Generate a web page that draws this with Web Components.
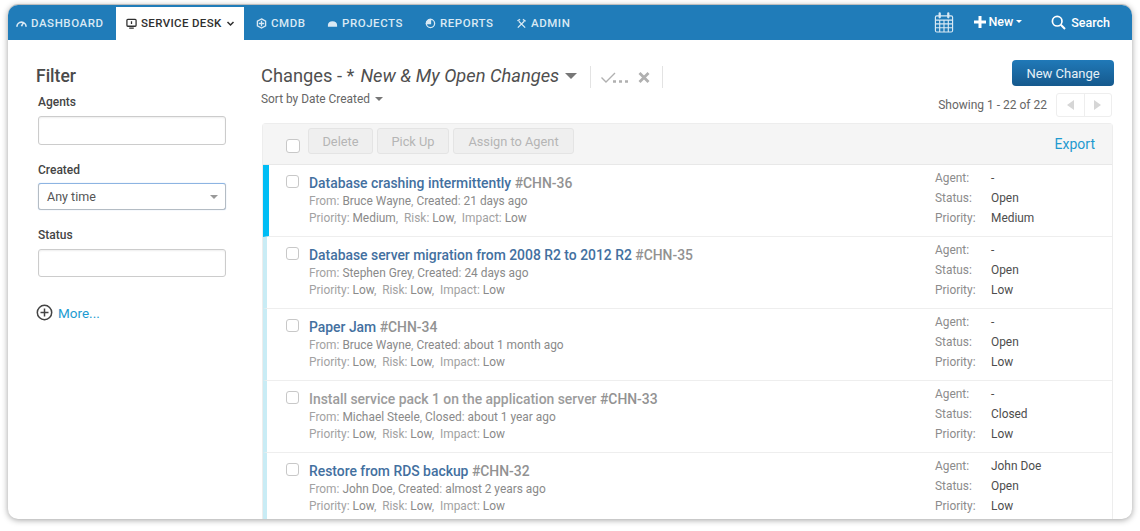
<!DOCTYPE html>
<html lang="en">
<head>
<meta charset="utf-8">
<title>Changes</title>
<style>
  html, body { margin: 0; height: 100%; background: #fff; }
  body { font-family: Roboto, "Liberation Sans", sans-serif; overflow: hidden; }
</style>
</head>
<body>
<app-window>
  <app-nav slot="nav"></app-nav>
  <filter-panel slot="side"></filter-panel>
  <changes-view slot="main">
    <change-row title-text="Database crashing intermittently" ref="#CHN-36" from="Bruce Wayne" when-label="Created" when="21 days ago" priority="Medium" status="Open" stripe="strong"></change-row>
    <change-row title-text="Database server migration from 2008 R2 to 2012 R2" ref="#CHN-35" from="Stephen Grey" when-label="Created" when="24 days ago" priority="Low" status="Open"></change-row>
    <change-row title-text="Paper Jam" ref="#CHN-34" from="Bruce Wayne" when-label="Created" when="about 1 month ago" priority="Low" status="Open"></change-row>
    <change-row title-text="Install service pack 1 on the application server" ref="#CHN-33" from="Michael Steele" when-label="Closed" when="about 1 year ago" priority="Low" status="Closed" closed></change-row>
    <change-row title-text="Restore from RDS backup" ref="#CHN-32" from="John Doe" when-label="Created" when="almost 2 years ago" priority="Low" status="Open" agent="John Doe"></change-row>
  </changes-view>
</app-window>

<script>
const windowTemplate = document.createElement('template');
windowTemplate.innerHTML = /*html*/`
  <style>
    :host {
      display: block;
      box-sizing: border-box;
      height: 531px;
      padding: 5px 8px 12px 8px;
    }
    #frame {
      height: 100%;
      display: flex;
      flex-direction: column;
      background: #fff;
      border-radius: 10px;
      box-shadow: 0 -1px 0 #bdbdbd, 0 1px 6px rgba(0, 0, 0, .38);
      overflow: hidden;
    }
    #body { flex: 1; min-height: 0; display: flex; }
  </style>
  <div id="frame">
    <slot name="nav"></slot>
    <div id="body">
      <slot name="side"></slot>
      <slot name="main"></slot>
    </div>
  </div>`;

class AppWindow extends HTMLElement {
  constructor() {
    super();
    this.attachShadow({ mode: 'open' });
  }

  connectedCallback() {
    this.shadowRoot.appendChild(windowTemplate.content.cloneNode(true));
  }
}

const navTemplate = document.createElement('template');
navTemplate.innerHTML = /*html*/`
  <style>
    :host {
      display: flex;
      height: 35px;
      flex: none;
      background: #207cb9;
      color: #d9e9f4;
      font-size: 11.5px;
      font-weight: 500;
      letter-spacing: .55px;
      padding-left: 8px;
      align-items: flex-end;
    }
    .tab {
      height: 33px;
      display: flex;
      align-items: center;
      gap: 4px;
      padding-bottom: 1px;
      box-sizing: border-box;
      white-space: nowrap;
    }
    .tab svg { width: 11px; height: 11px; fill: none; stroke: currentColor; stroke-width: 1.4; flex: none; }
    .dash { width: 92px; }
    .desk {
      width: 128px;
      margin-left: 8px;
      padding-left: 10px;
      background: #fff;
      color: #2f2f2f;
      letter-spacing: .35px;
    }
    .cmdb { width: 71px; margin-left: 12px; }
    .proj { width: 98px; }
    .rep { width: 91px; }
    .adm { width: 70px; }
    .right {
      margin-left: auto;
      height: 35px;
      display: flex;
      align-items: center;
      color: #fff;
      font-size: 12.5px;
      letter-spacing: 0;
      padding-right: 22px;
    }
    .cal { width: 20px; height: 21px; margin-right: 20px; }
    .new { display: flex; align-items: center; gap: 2px; margin-right: 29px; position: relative; top: -1px; }
    .new .plus { width: 12px; height: 12px; fill: #fff; }
    .new .caret { width: 0; height: 0; border: 3.5px solid transparent; border-top-color: #fff; border-bottom: 0; margin-left: 1px; }
    .search { display: flex; align-items: center; gap: 5px; }
    .search svg { width: 15px; height: 15px; fill: none; stroke: #fff; stroke-width: 1.7; }
  </style>
  <div class="tab dash">
    <svg viewBox="0 0 12 12" style="stroke-width:1.800"><path d="M1 9.500a5 5 0 0 1 10 0M6 9l2-4"/></svg>DASHBOARD
  </div>
  <div class="tab desk">
    <svg viewBox="0 0 12 12"><rect x="1" y="1.500" width="10" height="7.500" rx="1"/><path d="M3.500 11h5M6 3.500v3"/></svg>SERVICE DESK
    <svg viewBox="0 0 12 12" style="width:9px;height:9px;stroke-width:2"><path d="M2 4l4 4 4-4"/></svg>
  </div>
  <div class="tab cmdb">
    <svg viewBox="0 0 12 12"><path d="M6 1l4.500 2.500v5L6 11 1.500 8.500v-5zM3 6h6M6 3v6"/></svg>CMDB
  </div>
  <div class="tab proj">
    <svg viewBox="0 0 12 12" style="fill:currentColor;stroke:none"><path d="M1 9.500V7.500C1 5 3 3.500 6 3.500s5 1.500 5 4v2z"/></svg>PROJECTS
  </div>
  <div class="tab rep">
    <svg viewBox="0 0 12 12"><circle cx="6" cy="6" r="4.500"/><path d="M6 1.500V6H1.500A4.500 4.500 0 0 1 6 1.500z" fill="currentColor"/></svg>REPORTS
  </div>
  <div class="tab adm">
    <svg viewBox="0 0 12 12"><path d="M2 10.500l7-7M10 10.500L3 3.500M1.500 3l3-1.500M7.500 1.500l3 2"/></svg>ADMIN
  </div>
  <div class="right">
    <svg class="cal" viewBox="0 0 20 22" fill="none" stroke="#d9e9f4" stroke-width="1.200">
      <rect x="1" y="4" width="18" height="17" rx="1.500"/>
      <path d="M1 8.500h18M1 12.500h18M1 16.500h18M5.500 8.500V21M10 8.500V21M14.500 8.500V21"/>
      <path d="M5.500 1.500v4M14.500 1.500v4" stroke-width="2.400" stroke-linecap="round"/>
    </svg>
    <div class="new">
      <svg class="plus" viewBox="0 0 12 12"><path d="M4.500 0h3v4.500H12v3H7.500V12h-3V7.500H0v-3h4.500z"/></svg>
      <span>New</span><span class="caret"></span>
    </div>
    <div class="search">
      <svg viewBox="0 0 15 15"><circle cx="6.200" cy="6.200" r="4.800"/><path d="M9.800 9.800L14 14" stroke-width="2"/></svg>
      <span>Search</span>
    </div>
  </div>`;

class AppNav extends HTMLElement {
  constructor() {
    super();
    this.attachShadow({ mode: 'open' });
  }

  connectedCallback() {
    this.shadowRoot.appendChild(navTemplate.content.cloneNode(true));
  }
}

const filterTemplate = document.createElement('template');
filterTemplate.innerHTML = /*html*/`
  <style>
    :host {
      display: block;
      flex: none;
      width: 253px;
      box-sizing: border-box;
      padding: 27px 0 0 30px;
      color: #444;
    }
    h2 { margin: 0 0 10px -2px; font-size: 17.500px; font-weight: 500; line-height: 18px; color: #4a4a4a; }
    label { display: block; font-size: 12px; font-weight: 500; line-height: 14px; color: #444; }
    .input {
      width: 188px;
      height: 29px;
      box-sizing: border-box;
      margin: 7px 0 18px;
      border: 1px solid #ccc;
      border-radius: 3px;
      box-shadow: inset 0 1px 2px rgba(0, 0, 0, .07);
      background: #fff;
    }
    .select {
      height: 27px;
      margin: 6px 0 18px;
      border: 1px solid #b4bcc4;
      border-top-color: #8db4e2;
      box-shadow: 0 0 1px rgba(82, 150, 230, .5);
      display: flex;
      align-items: center;
      justify-content: space-between;
      padding: 0 7px 0 8px;
      font-size: 12.500px;
      color: #555;
    }
    .select i { width: 0; height: 0; border: 4px solid transparent; border-top-color: #999; border-bottom: 0; }
    .status { margin: 7px 0 0; height: 28px; }
    .more {
      display: flex;
      align-items: center;
      gap: 5px;
      margin: 27px 0 0 -2px;
      font-size: 13.500px;
      color: #1d9bd1;
    }
    .more svg { width: 17px; height: 17px; fill: none; stroke: #444; stroke-width: 1.500; }
  </style>
  <h2>Filter</h2>
  <label>Agents</label>
  <div class="input"></div>
  <label>Created</label>
  <div class="input select"><span>Any time</span><i></i></div>
  <label>Status</label>
  <div class="input status"></div>
  <div class="more">
    <svg viewBox="0 0 17 17"><circle cx="8.500" cy="8.500" r="7.200"/><path d="M8.500 4.500v8M4.500 8.500h8"/></svg>
    <span>More...</span>
  </div>`;

class FilterPanel extends HTMLElement {
  constructor() {
    super();
    this.attachShadow({ mode: 'open' });
  }

  connectedCallback() {
    this.shadowRoot.appendChild(filterTemplate.content.cloneNode(true));
  }
}

const viewTemplate = document.createElement('template');
viewTemplate.innerHTML = /*html*/`
  <style>
    :host {
      display: block;
      flex: 1;
      min-width: 0;
      padding: 0 19px 0 0;
      color: #555;
    }
    header { display: flex; justify-content: space-between; height: 83px; box-sizing: border-box; }
    .heading { padding-top: 25px; }
    .title { display: flex; align-items: center; height: 21px; font-size: 18.300px; color: #4f4f4f; white-space: nowrap; }
    .title em { margin-left: 6px; font-style: italic; }
    .title .caret { width: 0; height: 0; border: 6px solid transparent; border-top: 6px solid #777; border-bottom: 0; margin: 1px 0 0 6px; }
    .tools { display: flex; align-items: center; height: 22px; margin: 3px 0 0 13px; border-left: 1px solid #e3e3e3; border-right: 1px solid #e3e3e3; padding: 0 12px 0 10px; gap: 9px; }
    .tools svg { display: block; fill: none; stroke: #b0b0b0; }
    .sort { display: flex; align-items: center; margin-top: 6px; font-size: 11.900px; color: #666; }
    .sort i { width: 0; height: 0; border: 4px solid transparent; border-top-color: #777; border-bottom: 0; margin-left: 5px; }
    .actions { display: flex; flex-direction: column; align-items: flex-end; padding-top: 20px; }
    .primary {
      width: 102px; height: 26px; margin-right: -1px;
      display: flex; align-items: center; justify-content: center;
      border-radius: 4px;
      background: linear-gradient(#2079b8, #15598d);
      color: #e6f0f7;
      font-size: 13px;
      box-sizing: border-box;
    }
    .paging { display: flex; align-items: center; gap: 9px; margin: 7px 1px 0 0; font-size: 12px; color: #666; }
    .pager { display: flex; width: 56px; height: 24px; box-sizing: border-box; border: 1px solid #eee; border-radius: 3px; }
    .pager span { flex: 1; display: flex; align-items: center; justify-content: center; }
    .pager span + span { border-left: 1px solid #eee; }
    .pager i { width: 0; height: 0; border: 5.500px solid transparent; }
    .pager .l { border-left: 0; border-right: 7px solid #d6d6d6; }
    .pager .r { border-right: 0; border-left: 7px solid #d6d6d6; }
    .panel { border: 1px solid #ededed; border-bottom: 0; border-radius: 4px 4px 0 0; margin-left: 1px; }
    .bar {
      height: 41px;
      background: #f5f5f5;
      border-bottom: 1px solid #e8e8e8;
      display: flex;
      align-items: flex-start;
      padding: 4px 0 0 23px;
      box-sizing: border-box;
      gap: 4px;
    }
    .check { width: 12px; height: 12px; border: 1px solid #c8c8c8; border-radius: 3px; background: #fff; margin: 11px 4px 0 0; }
    .btn {
      height: 26px;
      display: flex; align-items: center; justify-content: center;
      box-sizing: border-box;
      border: 1px solid #e4e4e4;
      border-radius: 3px;
      background: #efefef;
      color: #b5b5b5;
      font-size: 12.800px;
    }
    .export { margin-left: auto; padding: 8px 17px 0 0; font-size: 14px; color: #1f9ad0; }
  </style>
  <header>
    <div class="heading">
      <div class="title">
        <span>Changes - *</span><em>New &amp; My Open Changes</em><span class="caret"></span>
        <div class="tools">
          <svg width="28" height="12" viewBox="0 0 28 12"><path d="M0.500 6.500l4.500 4.500 9-9" stroke-width="1.400"/><path d="M12 10.500h3M18 10.500h3M24 10.500h3" stroke-width="2.400"/></svg>
          <svg width="12" height="11" viewBox="0 0 12 11"><path d="M1.500 1l9 9M10.500 1l-9 9" stroke-width="2.800"/></svg>
        </div>
      </div>
      <div class="sort"><span>Sort by Date Created</span><i></i></div>
    </div>
    <div class="actions">
      <div class="primary">New Change</div>
      <div class="paging">
        <span>Showing 1 - 22 of 22</span>
        <div class="pager"><span><i class="l"></i></span><span><i class="r"></i></span></div>
      </div>
    </div>
  </header>
  <div class="panel">
    <div class="bar">
      <span class="check"></span>
      <span class="btn" style="width:65px">Delete</span>
      <span class="btn" style="width:72px">Pick Up</span>
      <span class="btn" style="width:121px">Assign to Agent</span>
      <span class="export">Export</span>
    </div>
    <slot></slot>
  </div>`;

class ChangesView extends HTMLElement {
  constructor() {
    super();
    this.attachShadow({ mode: 'open' });
  }

  connectedCallback() {
    this.shadowRoot.appendChild(viewTemplate.content.cloneNode(true));
  }
}

const rowTemplate = document.createElement('template');
rowTemplate.innerHTML = /*html*/`
  <style>
    :host {
      --stripe: 4px;
      display: flex;
      height: 72px;
      box-sizing: border-box;
      border-bottom: 1px solid #eeeeee;
      border-left: var(--stripe) solid #c9ecf5;
      font-size: 11.900px;
      color: #a2a2a2;
    }
    :host([stripe="strong"]) { --stripe: 6px; border-left-color: #00bdf5; }
    .check { width: 11px; height: 11px; flex: none; border: 1px solid #c8c8c8; border-radius: 3px; margin: 10px 10px 0 calc(23px - var(--stripe)); }
    .text { flex: 1; min-width: 0; padding-top: 9px; }
    .name { font-size: 13.900px; font-weight: 500; line-height: 19px; height: 19px; white-space: nowrap; }
    .name b { font-weight: 500; color: #43709f; }
    .name span { color: #929292; }
    :host([closed]) .name b { color: #9c9c9c; }
    .line { height: 17px; line-height: 17px; }
    .line span { color: #8a8a8a; }
    .meta {
      width: 177px;
      flex: none;
      padding-top: 3px;
      display: grid;
      grid-template-columns: 56px 1fr;
      grid-auto-rows: 20px;
      align-items: center;
      color: #8c8c8c;
    }
    .meta .v { color: #4d4d4d; }
  </style>
  <span class="check"></span>
  <div class="text">
    <div class="name"><b id="title"></b> <span id="ref"></span></div>
    <div class="line">From: <span id="from"></span>, <span id="when-label"></span>: <span id="when"></span></div>
    <div class="line">Priority: <span id="prio"></span>,&nbsp; Risk: <span>Low</span>,&nbsp; Impact: <span>Low</span></div>
  </div>
  <div class="meta">
    <span>Agent:</span><span class="v" id="agent"></span>
    <span>Status:</span><span class="v" id="status"></span>
    <span>Priority:</span><span class="v" id="priority"></span>
  </div>`;

class ChangeRow extends HTMLElement {
  constructor() {
    super();
    this.attachShadow({ mode: 'open' });
  }

  connectedCallback() {
    this.shadowRoot.appendChild(rowTemplate.content.cloneNode(true));
    const $ = (id) => this.shadowRoot.getElementById(id);
    const priority = this.getAttribute('priority');
    $('title').textContent = this.getAttribute('title-text');
    $('ref').textContent = this.getAttribute('ref');
    $('from').textContent = this.getAttribute('from');
    $('when-label').textContent = this.getAttribute('when-label');
    $('when').textContent = this.getAttribute('when');
    $('prio').textContent = priority;
    $('agent').textContent = this.getAttribute('agent') || '-';
    $('status').textContent = this.getAttribute('status');
    $('priority').textContent = priority;
  }
}

customElements.define('app-window', AppWindow);
customElements.define('app-nav', AppNav);
customElements.define('filter-panel', FilterPanel);
customElements.define('changes-view', ChangesView);
customElements.define('change-row', ChangeRow);
</script>
</body>
</html>
